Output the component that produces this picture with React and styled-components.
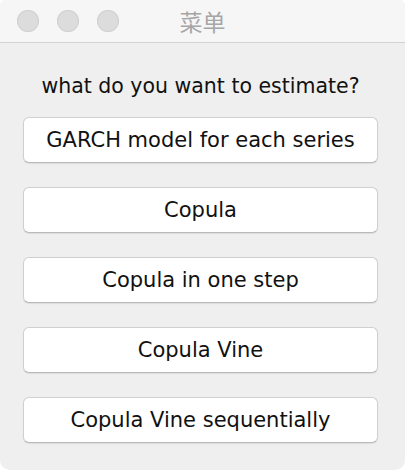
import React from "react";
import styled, { createGlobalStyle } from "styled-components";

const Global = createGlobalStyle`
  html, body {
    margin: 0;
    padding: 0;
    background: #ffffff;
  }
  body {
    font-family: "DejaVu Sans", "Noto Sans CJK SC", sans-serif;
  }
`;

const Window = styled.div`
  width: 405px;
  height: 470px;
  background: #efefef;
  border-radius: 6px 6px 10px 10px;
  overflow: hidden;
  display: flex;
  flex-direction: column;
`;

const TitleBar = styled.div`
  height: 42px;
  background: #f6f6f6;
  border-bottom: 1px solid #d3d3d3;
  display: flex;
  align-items: center;
  position: relative;
  flex-shrink: 0;
`;

const Lights = styled.div`
  display: flex;
  gap: 18px;
  padding-left: 17px;
`;

const Light = styled.span`
  width: 22px;
  height: 22px;
  border-radius: 50%;
  background: #dcdcdc;
  box-shadow: inset 0 0 0 1px #d2d2d2;
`;

const Title = styled.div`
  position: absolute;
  left: 0;
  right: 0;
  text-align: center;
  font-family: "Noto Sans CJK SC", sans-serif;
  font-size: 23px;
  line-height: 42px;
  color: #a6a6a6;
`;

const Body = styled.div`
  display: flex;
  flex-direction: column;
  align-items: flex-start;
  padding: 28px 0 0 23px;
`;

const Prompt = styled.div`
  width: 355px;
  text-align: center;
  font-size: 20.5px;
  color: #111;
  height: 30px;
  line-height: 30px;
  margin-bottom: 16px;
`;

const List = styled.div`
  display: flex;
  flex-direction: column;
  gap: 24px;
`;

const Button = styled.button`
  width: 355px;
  height: 46px;
  background: #ffffff;
  border: 1px solid #cfcfcf;
  border-bottom-color: #b9b9b9;
  border-radius: 6px;
  box-shadow: 0 1px 1px rgba(0, 0, 0, 0.08);
  font-family: "DejaVu Sans", sans-serif;
  font-size: 21px;
  color: #111;
  padding: 0;
`;

const options = [
  "GARCH model for each series",
  "Copula",
  "Copula in one step",
  "Copula Vine",
  "Copula Vine sequentially",
];

export default function App() {
  return (
    <>
      <Global />
      <Window>
        <TitleBar>
          <Lights>
            <Light />
            <Light />
            <Light />
          </Lights>
          <Title>菜单</Title>
        </TitleBar>
        <Body>
          <Prompt>what do you want to estimate?</Prompt>
          <List>
            {options.map((o) => (
              <Button key={o}>{o}</Button>
            ))}
          </List>
        </Body>
      </Window>
    </>
  );
}
